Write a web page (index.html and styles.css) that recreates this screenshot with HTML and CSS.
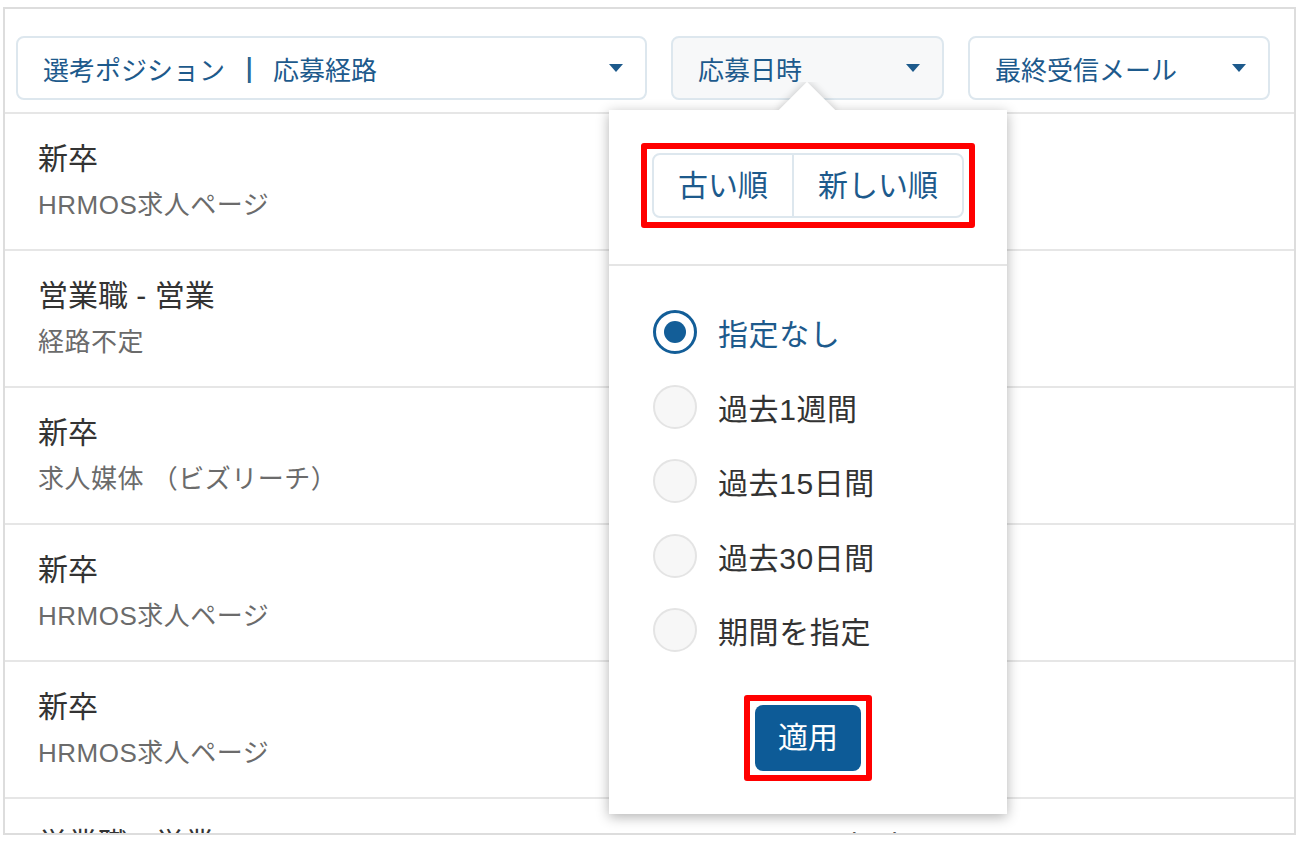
FILE: index.html
```html
<!DOCTYPE html>
<html lang="ja">
<head>
<meta charset="utf-8">
<title>応募者一覧</title>
<link rel="stylesheet" href="styles.css">
</head>
<body>
<div class="frame">
  <div class="filters">
    <div class="dd dd-wide"><span class="dd-label">選考ポジション<span class="sep">｜</span>応募経路</span><span class="caret"></span></div>
    <div class="dd dd-date"><span class="dd-label">応募日時</span><span class="caret"></span></div>
    <div class="dd dd-mail"><span class="dd-label">最終受信メール</span><span class="caret"></span></div>
  </div>
  <div class="list">
    <div class="row"><div class="cell"><div class="title">新卒</div><div class="sub">HRMOS求人ページ</div></div><div class="date"></div></div>
    <div class="row"><div class="cell"><div class="title">営業職 - 営業</div><div class="sub">経路不定</div></div><div class="date"></div></div>
    <div class="row"><div class="cell"><div class="title">新卒</div><div class="sub">求人媒体 （ビズリーチ）</div></div><div class="date"></div></div>
    <div class="row"><div class="cell"><div class="title">新卒</div><div class="sub">HRMOS求人ページ</div></div><div class="date"></div></div>
    <div class="row"><div class="cell"><div class="title">新卒</div><div class="sub">HRMOS求人ページ</div></div><div class="date"></div></div>
    <div class="row"><div class="cell"><div class="title">営業職 - 営業</div><div class="sub">経路不定</div></div><div class="date">2019/10/01</div></div>
  </div>
  <div class="popover">
    <div class="arrow"></div>
    <div class="sort">
      <div class="mark">
        <div class="seg"><div class="seg-btn">古い順</div><div class="seg-btn">新しい順</div></div>
      </div>
    </div>
    <div class="periods">
      <div class="period on"><span class="radio on"></span><span>指定なし</span></div>
      <div class="period"><span class="radio"></span><span>過去1週間</span></div>
      <div class="period"><span class="radio"></span><span>過去15日間</span></div>
      <div class="period"><span class="radio"></span><span>過去30日間</span></div>
      <div class="period"><span class="radio"></span><span>期間を指定</span></div>
    </div>
    <div class="actions">
      <div class="mark"><div class="apply">適用</div></div>
    </div>
  </div>
</div>
</body>
</html>
```

FILE: styles.css
```css
* { box-sizing: border-box; }
html, body { margin: 0; padding: 0; background: #fff; }
body {
  font-family: "Liberation Sans", "Noto Sans CJK JP", sans-serif;
  color: #333;
}
.frame {
  position: relative;
  margin: 7px 0 0 3px;
  width: 1293px;
  height: 828px;
  border: 2px solid #dddddd;
  overflow: hidden;
  background: #fff;
}
.filters {
  display: flex;
  gap: 24px;
  padding: 27px 24px 12px 11px;
  border-bottom: 2px solid #e6e6e6;
}
.dd {
  display: flex;
  align-items: center;
  justify-content: space-between;
  height: 64px;
  padding: 0 22px 0 25px;
  border: 2px solid #dde7ee;
  border-radius: 8px;
  background: #fff;
  color: #1d5a8c;
  font-size: 26px;
  white-space: nowrap;
}
.dd-wide { flex: 1 1 auto; }
.dd-date { flex: 0 0 273px; background: #f7f8f9; }
.dd-mail { flex: 0 0 302px; }
.sep {
  margin: 0 11px;
  font-weight: 700;
  color: #1d5a8c;
  text-shadow: 1px 0 0 #1d5a8c, -0.5px 0 0 #1d5a8c;
}
.caret {
  width: 0;
  height: 0;
  border-left: 7px solid transparent;
  border-right: 7px solid transparent;
  border-top: 8px solid #1d5a8c;
}
.row {
  display: grid;
  grid-template-columns: 745px 1fr;
  height: 137px;
  padding: 27px 0 0 33px;
  border-bottom: 2px solid #e6e6e6;
}
.title { font-size: 30px; line-height: 36px; color: #333; white-space: nowrap; }
.sub { margin-top: 12px; font-size: 26px; line-height: 32px; color: #6b6b6b; letter-spacing: 0.5px; white-space: nowrap; }
.date { font-size: 29px; line-height: 36px; color: #555; }

.popover {
  position: absolute;
  left: 604px;
  top: 101px;
  width: 398px;
  height: 704px;
  background: #fff;
  box-shadow: 0 3px 12px rgba(0, 0, 0, 0.3);
  z-index: 5;
}
.arrow {
  position: absolute;
  left: 163px;
  top: -28px;
  width: 70px;
  height: 28px;
  overflow: hidden;
}
.arrow::before {
  content: "";
  position: absolute;
  left: 15px;
  top: 8px;
  width: 40px;
  height: 40px;
  background: #fff;
  transform: rotate(45deg);
  box-shadow: 0 0 8px rgba(0, 0, 0, 0.22);
}
.sort {
  display: flex;
  justify-content: center;
  padding: 33px 0 36px;
  border-bottom: 2px solid #e5e5e5;
}
.mark {
  display: inline-flex;
  border: 6px solid #ff0000;
  border-radius: 3px;
  padding: 4px 5px;
}
.seg {
  display: flex;
  border: 2px solid #dde7ee;
  border-radius: 8px;
}
.seg-btn {
  height: 61px;
  line-height: 61px;
  padding: 0 24px;
  font-size: 30px;
  color: #1d5a8c;
  white-space: nowrap;
}
.seg-btn + .seg-btn { border-left: 2px solid #dde7ee; }
.periods { padding: 29px 0 0 44px; }
.period {
  display: flex;
  align-items: center;
  height: 74.5px;
  font-size: 30px;
  color: #333;
  letter-spacing: 0.6px;
}
.period.on { color: #1d5a8c; }
.radio {
  flex: none;
  width: 44px;
  height: 44px;
  border-radius: 50%;
  border: 2px solid #e4e4e4;
  background: #f7f7f7;
  margin-right: 21px;
}
.radio.on {
  display: flex;
  align-items: center;
  justify-content: center;
  border: 3px solid #135e98;
  background: #fff;
}
.radio.on::after {
  content: "";
  width: 22px;
  height: 22px;
  border-radius: 50%;
  background: #135e98;
}
.actions {
  display: flex;
  justify-content: center;
  padding-top: 27.5px;
}
.apply {
  height: 66px;
  line-height: 66px;
  padding: 0 23px;
  border-radius: 8px;
  background: #0d5b97;
  color: #fff;
  font-size: 30px;
}
```
